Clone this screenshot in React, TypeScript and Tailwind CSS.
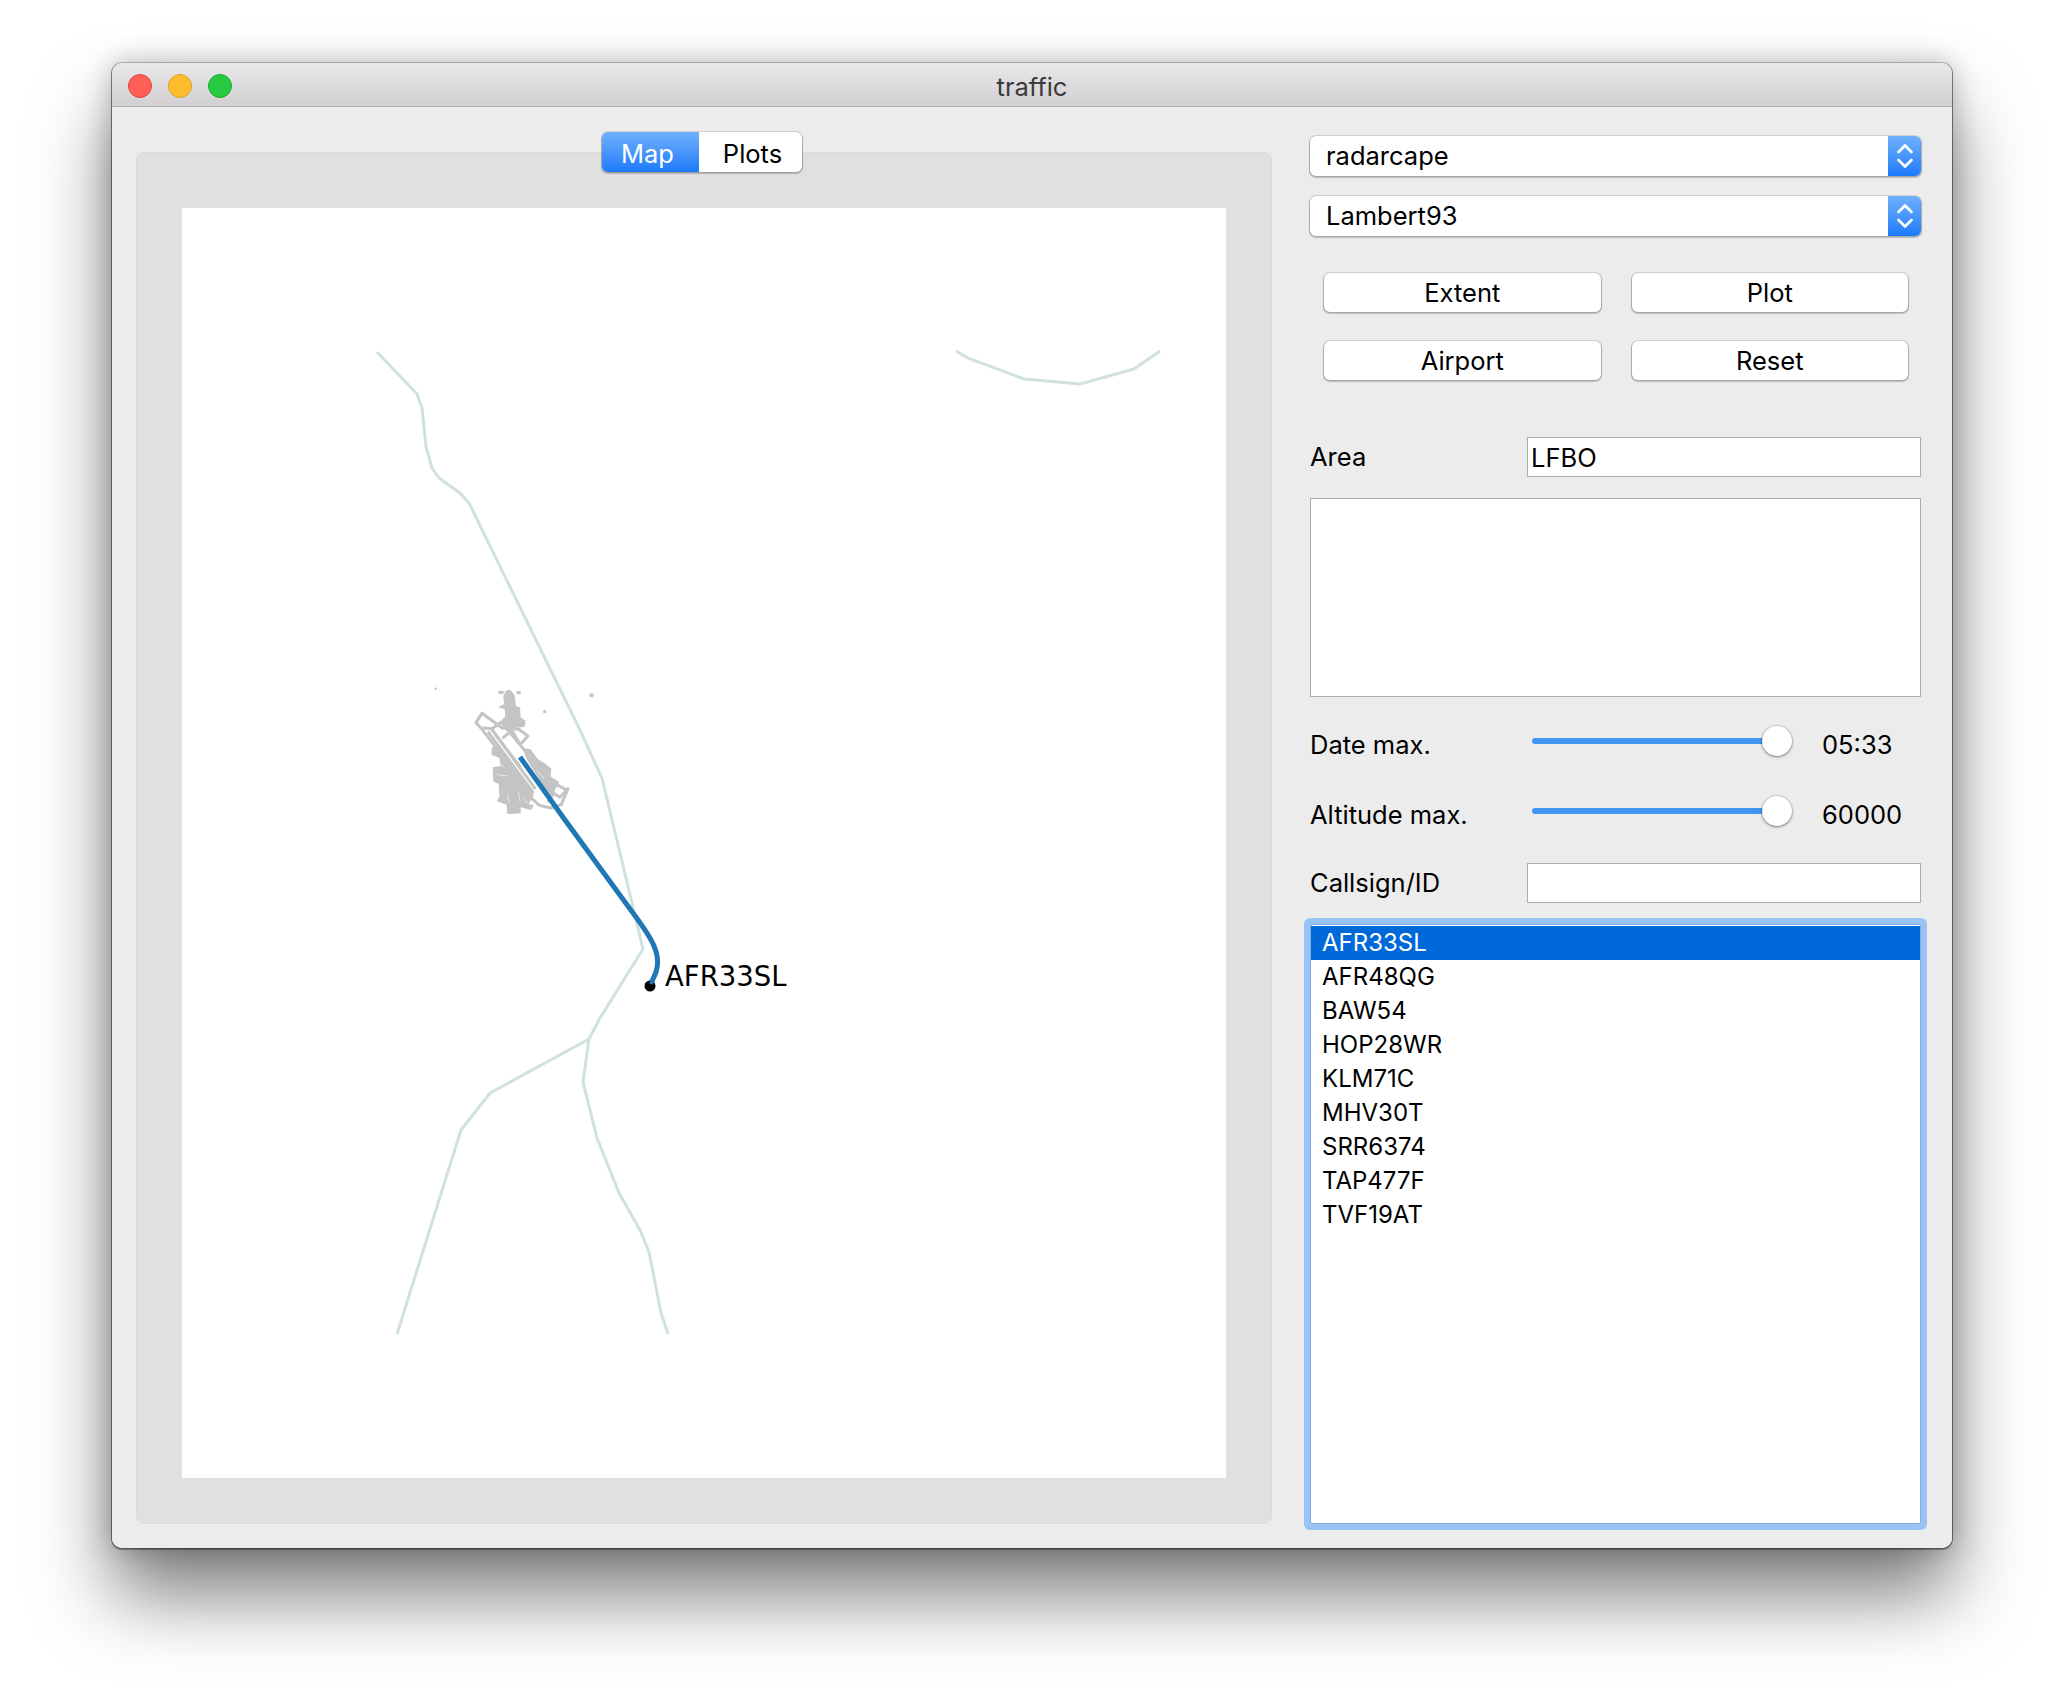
import React from "react";

const callsigns = ["AFR33SL", "AFR48QG", "BAW54", "HOP28WR", "KLM71C", "MHV30T", "SRR6374", "TAP477F", "TVF19AT"];

function Combo({ label }: { label: string }) {
  return (
    <div className="flex h-[40px] items-stretch rounded-[6px] bg-white shadow-[0_0_0_1px_rgba(0,0,0,0.1),0_1px_1px_1px_rgba(0,0,0,0.2)]">
      <div className="flex-1 pl-[16px] leading-[39px]">{label}</div>
      <div className="flex w-[33px] items-center justify-center rounded-r-[6px] bg-gradient-to-b from-[#6fb0fb] to-[#1a7afa]">
        <svg width="18" height="28" viewBox="0 0 18 28" fill="none" stroke="white" strokeWidth="2.6" strokeLinecap="round" strokeLinejoin="round">
          <path d="M2.5 10 L9 3.5 L15.5 10" />
          <path d="M2.5 18 L9 24.5 L15.5 18" />
        </svg>
      </div>
    </div>
  );
}

function PushButton({ label }: { label: string }) {
  return (
    <button
      type="button"
      className="h-[39px] w-full rounded-[6px] bg-white leading-[38px] shadow-[0_0_0_1px_rgba(0,0,0,0.1),0_1px_1px_1px_rgba(0,0,0,0.2)]"
    >
      {label}
    </button>
  );
}

function FieldRow({ label, value }: { label: string; value?: string }) {
  return (
    <div className="flex h-[40px] items-center">
      <div className="w-[217px] pt-px">{label}</div>
      <div className="h-full flex-1 border border-[#acacac] bg-white pl-[3px] leading-[39px]">{value}</div>
    </div>
  );
}

function SliderRow({ label, value }: { label: string; value: string }) {
  return (
    <div className="flex h-[40px] items-center">
      <div className="w-[222px]">{label}</div>
      <div className="relative -mt-[8px] flex w-[260px] items-center">
        <div className="h-[6px] w-[240px] rounded-full bg-[#3f97f3]" />
        <div className="absolute left-[230px] h-[30px] w-[30px] rounded-full bg-white shadow-[0_0_0_1px_rgba(0,0,0,0.08),0_1px_3px_rgba(0,0,0,0.45)]" />
      </div>
      <div className="pl-[30px]">{value}</div>
    </div>
  );
}

function Airport() {
  // traced at 3x from the reference, so everything is scaled back down
  return (
    <g transform="translate(420 660) scale(0.3333)" fill="#c4c4c4" stroke="#c4c4c4" strokeLinejoin="round" strokeLinecap="round">
      <circle cx="47" cy="86" r="3.5" stroke="none" />
      <circle cx="515" cy="106" r="6.5" stroke="none" />
      <circle cx="374" cy="155" r="5" stroke="none" />
      <ellipse cx="243" cy="97" rx="9" ry="5.5" stroke="none" />
      <ellipse cx="296" cy="98" rx="7" ry="5.5" stroke="none" />
      <path stroke="none" d="M256 95 Q266 84 276 95 L284 106 L288 138 L300 142 L302 172 L317 182 L314 200 L270 206 L244 192 L248 176 L256 170 L254 148 L234 142 L252 132 L250 108 Z" />
      <g fill="none" strokeWidth="9">
        <path d="M186 160 L168 188 L186 208 L228 262 L262 308" />
        <path d="M186 160 L246 204 L296 208 L324 228 L304 250" />
        <path d="M190 204 L214 206 L344 384" />
        <path d="M206 218 L338 396" />
        <path d="M214 208 L244 186 L318 276" />
        <path d="M228 226 L300 320" />
        <path d="M250 232 L276 212 L300 252" />
        <path d="M444 386 L424 434 L392 444 L358 436 L330 410" />
        <path d="M414 376 L440 390 L420 412 L398 398" />
        <path d="M380 360 L400 400 L386 424" />
      </g>
      <path stroke="none" d="M216 262 L236 256 L262 296 L296 344 L330 392 L342 404 L326 432 L342 436 L332 450 L302 442 L302 460 L262 462 L260 434 L230 424 L238 410 L236 372 L220 364 L218 322 L242 318 L238 294 L214 284 Z" />
      <path stroke="none" d="M308 264 L332 268 L354 298 L374 310 L394 326 L392 350 L418 366 L406 388 L398 412 L372 384 L348 342 L320 298 Z" />
      <g fill="none" stroke="#ffffff" strokeWidth="2.5" opacity="0.7">
        <path d="M226 300 L252 322" />
        <path d="M232 344 L264 348" />
        <path d="M262 404 L268 428" />
        <path d="M296 396 L300 424" />
        <path d="M312 414 L322 428" />
        <path d="M350 330 L372 356" />
      </g>
    </g>
  );
}

function MapView() {
  const border = "#d0e1e0";
  return (
    <svg viewBox="182 208 1044 1270" className="block h-full w-full">
      <g fill="none" stroke={border} strokeWidth="3" strokeLinejoin="round">
        <polyline points="377,352 417,394 422,408 426,447 432,468 439,478 460,493 469,503 580,730 602,778 643,949 600,1018 589,1039 490,1093 461,1130 397,1334" />
        <polyline points="589,1039 583,1082 597,1138 619,1193 640,1230 649,1252 661,1313 668,1334" />
        <polyline points="956,351 968,358 1024,379 1080,384 1134,369 1160,351" />
      </g>
      <Airport />
      <path d="M520 757 L565 820 L633 913 Q650 936 654 946 Q660 960 656 972 L650 986" fill="none" stroke="#1f77b4" strokeWidth="5" />
      <circle cx="650" cy="986" r="5.5" fill="#000000" />
      <path d="M656 972 L651 984" fill="none" stroke="#1f77b4" strokeWidth="4" />
      <text x="665" y="986" fontSize="27.5" fill="#000000" className="[font-family:'DejaVu_Sans',sans-serif]">
        AFR33SL
      </text>
    </svg>
  );
}

export default function App() {
  return (
    <div className="h-[1708px] w-[2064px] overflow-hidden bg-white pl-[112px] pt-[63px] text-[25.5px] text-black [font-family:Inter,sans-serif]">
      <div className="flex h-[1485px] w-[1840px] flex-col overflow-hidden rounded-[10px] shadow-[0_0_0_1px_rgba(0,0,0,0.22),0_1px_0_1px_rgba(0,0,0,0.3),0_48px_76px_rgba(0,0,0,0.5),0_0_28px_rgba(0,0,0,0.26)]">
        <div className="relative flex h-[44px] shrink-0 items-center justify-center border-b border-[#b1b0b1] bg-gradient-to-b from-[#e9e7e9] to-[#d2d0d2] pt-[6px] text-[#3a3a3a]">
          <div className="absolute left-[16px] top-[11px] flex gap-[16px]">
            <div className="h-[24px] w-[24px] rounded-full border border-[#e0443e] bg-[#ff5f57]" />
            <div className="h-[24px] w-[24px] rounded-full border border-[#dea123] bg-[#ffbd2e]" />
            <div className="h-[24px] w-[24px] rounded-full border border-[#1aab29] bg-[#28c940]" />
          </div>
          traffic
        </div>
        <div className="flex flex-1 bg-[#ececec] pl-[24px]">
          <div className="relative mt-[45px] h-[1372px] w-[1136px] rounded-[8px] border border-[#dadada] bg-[#e0e0e0] pb-[45px] pl-[45px] pr-[45px] pt-[55px]">
            <div className="absolute left-[465px] top-[-21px] flex h-[40px] w-[200px] overflow-hidden rounded-[6px] bg-white shadow-[0_0_0_1px_rgba(0,0,0,0.1),0_1px_1px_1px_rgba(0,0,0,0.2)]">
              <div className="flex w-[97px] items-center justify-center bg-gradient-to-b from-[#6fb0fb] to-[#1a7afa] pr-[6px] pt-[4px] text-white">Map</div>
              <div className="flex flex-1 items-center justify-center pl-[4px] pt-[4px]">Plots</div>
            </div>
            <div className="h-full w-full bg-white">
              <MapView />
            </div>
          </div>
          <div className="ml-[38px] flex w-[611px] flex-col pt-[29px]">
            <Combo label="radarcape" />
            <div className="mt-[20px]">
              <Combo label="Lambert93" />
            </div>
            <div className="mt-[37px] grid grid-cols-2 gap-x-[31px] gap-y-[29px] pl-[14px] pr-[13px]">
              <PushButton label="Extent" />
              <PushButton label="Plot" />
              <PushButton label="Airport" />
              <PushButton label="Reset" />
            </div>
            <div className="mt-[57px]">
              <FieldRow label="Area" value="LFBO" />
            </div>
            <div className="mt-[21px] h-[199px] border border-[#acacac] bg-white" />
            <div className="mt-[28px]">
              <SliderRow label="Date max." value="05:33" />
            </div>
            <div className="mt-[30px]">
              <SliderRow label="Altitude max." value="60000" />
            </div>
            <div className="mt-[28px]">
              <FieldRow label="Callsign/ID" />
            </div>
            <div className="mt-[21px] h-[600px] rounded-[2px] border border-[#7fabdf] bg-white pt-px text-[24px] leading-[34px] shadow-[0_0_0_6px_#98c3f4]">
              {callsigns.map((callsign, index) => (
                <div key={callsign} className={index === 0 ? "h-[34px] bg-[#0069d9] pl-[11px] text-white" : "h-[34px] pl-[11px]"}>
                  {callsign}
                </div>
              ))}
            </div>
          </div>
        </div>
      </div>
    </div>
  );
}
